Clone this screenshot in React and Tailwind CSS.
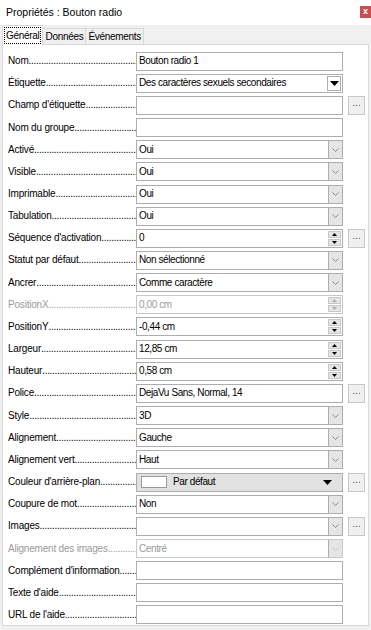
import React from 'react';

const dots = '.'.repeat(80);

function Chevron({ muted }) {
  return (
    <div className="w-[14px] h-full border-l border-[#adadad] bg-[#e5e5e5] flex items-center justify-center">
      <svg width="7" height="4" viewBox="0 0 7 4">
        <polyline points="0.5,0.5 3.5,3.5 6.5,0.5" fill="none" stroke={muted ? '#c4c4c4' : '#8a8a8a'} strokeWidth="1" />
      </svg>
    </div>
  );
}

function Spin({ muted }) {
  const c = muted ? '#b0b0b0' : '#000';
  return (
    <div className="w-[14px] h-full flex flex-col gap-px py-px pr-px">
      <div className="flex-1 bg-[#e5e5e5] border border-[#c8c8c8] flex items-center justify-center">
        <svg width="5" height="3" viewBox="0 0 5 3"><polygon points="0,3 2.5,0 5,3" fill={c} /></svg>
      </div>
      <div className="flex-1 bg-[#e5e5e5] border border-[#c8c8c8] flex items-center justify-center">
        <svg width="5" height="3" viewBox="0 0 5 3"><polygon points="0,0 2.5,3 5,0" fill={c} /></svg>
      </div>
    </div>
  );
}

function BlackArrow() {
  return (
    <svg width="9" height="5" viewBox="0 0 9 5"><polygon points="0,0 4.5,5 9,0" fill="#000" /></svg>
  );
}

function Field({ row }) {
  const { value = '', kind = 'text', disabled } = row;
  const txt = disabled ? 'text-[#9a9a9a]' : 'text-black';
  const val = 'flex-1 truncate leading-[14px] text-[10px] tracking-[-0.4px]';
  if (kind === 'combo') {
    return (
      <div className="w-[207px] h-[19px] border border-[#adadad] bg-white flex items-center">
        <span className={`${val} pl-[2px] ${txt}`}>{value}</span>
        <div className="w-[14px] h-[15px] mr-[1px] border border-[#adadad] bg-white flex items-center justify-center">
          <BlackArrow />
        </div>
      </div>
    );
  }
  if (kind === 'color') {
    return (
      <div className="w-[207px] h-[19px] border border-[#adadad] bg-[#e1e1e1] flex items-center">
        <div className="ml-[4px] w-[26px] h-[12px] border border-[#9a9a9a] bg-white" />
        <span className={`${val} pl-[6px]`}>{value}</span>
        <div className="w-[14px] flex items-center justify-center mr-[8px]">
          <BlackArrow />
        </div>
      </div>
    );
  }
  return (
    <div className={`w-[207px] h-[19px] border ${disabled ? 'border-[#c8c8c8]' : 'border-[#adadad]'} bg-white flex items-center`}>
      <span className={`${val} pl-[2px] ${txt}`}>{value}</span>
      {kind === 'select' && <Chevron muted={disabled} />}
      {kind === 'spin' && <Spin muted={disabled} />}
    </div>
  );
}

const rows = [
  { label: 'Nom', value: 'Bouton radio 1' },
  { label: 'Étiquette', value: 'Des caractères sexuels secondaires', kind: 'combo' },
  { label: "Champ d'étiquette", btn: true },
  { label: 'Nom du groupe' },
  { label: 'Activé', value: 'Oui', kind: 'select' },
  { label: 'Visible', value: 'Oui', kind: 'select' },
  { label: 'Imprimable', value: 'Oui', kind: 'select' },
  { label: 'Tabulation', value: 'Oui', kind: 'select' },
  { label: "Séquence d'activation", value: '0', kind: 'spin', btn: true },
  { label: 'Statut par défaut', value: 'Non sélectionné', kind: 'select' },
  { label: 'Ancrer', value: 'Comme caractère', kind: 'select' },
  { label: 'PositionX', value: '0,00 cm', kind: 'spin', disabled: true },
  { label: 'PositionY', value: '-0,44 cm', kind: 'spin' },
  { label: 'Largeur', value: '12,85 cm', kind: 'spin' },
  { label: 'Hauteur', value: '0,58 cm', kind: 'spin' },
  { label: 'Police', value: 'DejaVu Sans, Normal, 14', btn: true },
  { label: 'Style', value: '3D', kind: 'select' },
  { label: 'Alignement', value: 'Gauche', kind: 'select' },
  { label: 'Alignement vert', value: 'Haut', kind: 'select' },
  { label: "Couleur d'arrière-plan", value: 'Par défaut', kind: 'color', btn: true },
  { label: 'Coupure de mot', value: 'Non', kind: 'select' },
  { label: 'Images', kind: 'select', btn: true },
  { label: 'Alignement des images', value: 'Centré', kind: 'select', disabled: true },
  { label: "Complément d'information" },
  { label: "Texte d'aide" },
  { label: "URL de l'aide" },
];

export default function App() {
  return (
    <div className="w-[371px] h-[630px] bg-[#f0f0f0] text-[10px] leading-none text-black overflow-hidden" style={{ fontFamily: '"Liberation Sans", Arial, sans-serif' }}>
      {/* Title bar */}
      <div className="h-[25px] bg-white flex items-center justify-between pl-[6px]">
        <span className="text-[10.5px]">Propriétés : Bouton radio</span>
        <div className="w-[11px] h-[12px] bg-[#c75050] text-white text-[9px] font-bold flex items-center justify-center mt-[-2px]">x</div>
      </div>

      {/* Tabs */}
      <div className="h-[20px] flex items-end pl-[2px] bg-[#f0f0f0] tracking-[-0.3px]">
        <div className="h-[20px] px-[1px] bg-white border border-b-0 border-[#d9d9d9] flex items-center relative z-10">
          <span className="border border-dotted border-black px-px py-[2px] leading-[11px]">Général</span>
        </div>
        <div className="h-[17px] px-[2px] border border-b-0 border-l-0 border-[#d9d9d9] flex items-center">Données</div>
        <div className="h-[17px] px-[2px] border border-b-0 border-l-0 border-[#d9d9d9] flex items-center">Événements</div>
      </div>

      {/* Panel */}
      <div className="mx-[2px] -mt-px h-[582px] bg-white border border-[#d9d9d9] pt-[5px] pl-[5px]">
        {rows.map((r) => (
          <div key={r.label} className="h-[22.16px] flex items-center">
            <div className={`w-[128px] flex items-baseline overflow-hidden whitespace-nowrap leading-[14px] ${r.disabled ? 'text-[#9a9a9a]' : ''}`}>
              <span className="shrink-0 tracking-[-0.2px]">{r.label}</span>
              <span className="overflow-hidden tracking-[-0.3px]">{dots}</span>
            </div>
            <Field row={r} />
            {r.btn && (
              <div className="ml-[5px] w-[17px] h-[19px] border border-[#c8c8c8] bg-[#f0f0f0] flex items-end justify-center pb-[6px] text-[10px] text-[#555]">...</div>
            )}
          </div>
        ))}
      </div>
    </div>
  );
}
